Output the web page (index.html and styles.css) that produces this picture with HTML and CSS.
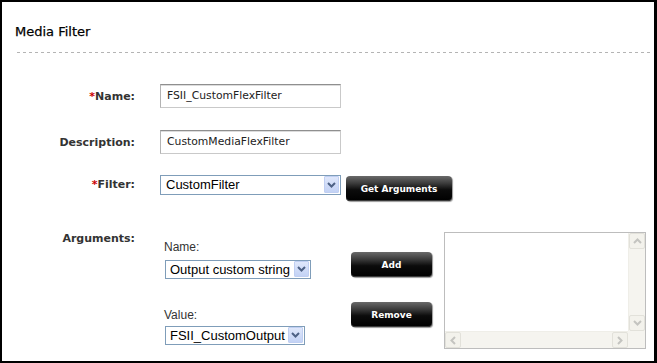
FILE: index.html
```html
<!DOCTYPE html>
<html>
<head>
<meta charset="utf-8">
<link rel="stylesheet" href="styles.css">
</head>
<body>
<div class="frame">
  <h2 class="title">Media Filter</h2>
  <div class="rule"></div>

  <div class="row row-name">
    <label class="lbl"><span class="req">*</span>Name:</label>
    <div class="input">FSII_CustomFlexFilter</div>
  </div>

  <div class="row row-desc">
    <label class="lbl">Description:</label>
    <div class="input">CustomMediaFlexFilter</div>
  </div>

  <div class="row row-filter">
    <label class="lbl lbl-sel"><span class="req">*</span>Filter:</label>
    <div class="field-inline">
      <div class="select sel-filter">
        <span class="sel-text">CustomFilter</span>
        <span class="sel-arrow"><svg width="9" height="6" viewBox="0 0 9 6"><polyline points="1,1 4.5,4.5 8,1" fill="none" stroke="#4d6185" stroke-width="2"/></svg></span>
      </div>
      <button class="btn btn-get">Get Arguments</button>
    </div>
  </div>

  <div class="row row-args">
    <label class="lbl lbl-args">Arguments:</label>
    <div class="args">
      <div class="args-col">
        <div class="small-lbl">Name:</div>
        <div class="select sel-small sel-name">
          <span class="sel-text">Output custom string</span>
          <span class="sel-arrow"><svg width="9" height="6" viewBox="0 0 9 6"><polyline points="1,1 4.5,4.5 8,1" fill="none" stroke="#4d6185" stroke-width="2"/></svg></span>
        </div>
        <div class="small-lbl small-lbl-value">Value:</div>
        <div class="select sel-small sel-value">
          <span class="sel-text">FSII_CustomOutput</span>
          <span class="sel-arrow"><svg width="9" height="6" viewBox="0 0 9 6"><polyline points="1,1 4.5,4.5 8,1" fill="none" stroke="#4d6185" stroke-width="2"/></svg></span>
        </div>
      </div>
      <div class="btn-col">
        <button class="btn btn-add">Add</button>
        <button class="btn btn-remove">Remove</button>
      </div>
      <div class="listbox">
        <div class="list-content"></div>
        <div class="vscroll">
          <span class="sb-btn"><svg width="9" height="6" viewBox="0 0 9 6"><polyline points="1,5 4.5,1.5 8,5" fill="none" stroke="#c4c4c0" stroke-width="2"/></svg></span>
          <span class="sb-btn"><svg width="9" height="6" viewBox="0 0 9 6"><polyline points="1,1 4.5,4.5 8,1" fill="none" stroke="#c4c4c0" stroke-width="2"/></svg></span>
        </div>
        <div class="hscroll">
          <span class="sb-btn"><svg width="6" height="9" viewBox="0 0 6 9"><polyline points="5,1 1.5,4.5 5,8" fill="none" stroke="#c4c4c0" stroke-width="2"/></svg></span>
          <span class="sb-btn"><svg width="6" height="9" viewBox="0 0 6 9"><polyline points="1,1 4.5,4.5 1,8" fill="none" stroke="#c4c4c0" stroke-width="2"/></svg></span>
        </div>
        <div class="corner"></div>
      </div>
    </div>
  </div>
</div>
</body>
</html>
```

FILE: styles.css
```css
* { box-sizing: border-box; }
html, body { margin: 0; padding: 0; background: #fff; }
body { width: 657px; height: 363px; overflow: hidden; }

.frame {
  width: 657px;
  height: 363px;
  border-top: 2px solid #000;
  border-left: 2px solid #000;
  border-right: 3px solid #000;
  border-bottom: 2px solid #000;
  font-family: "DejaVu Sans", Verdana, sans-serif;
  color: #333;
}

.title {
  margin: 22px 0 0 13px;
  font-size: 13px;
  line-height: 16px;
  font-weight: normal;
  color: #000;
  -webkit-text-stroke: 0.25px #000;
}

.rule {
  margin: 12px 2px 0 15px;
  height: 1px;
  background: repeating-linear-gradient(to right, #b4b4b4 0, #b4b4b4 3px, transparent 3px, transparent 6px);
}

.row {
  display: grid;
  grid-template-columns: 133px auto;
  column-gap: 25px;
  align-items: center;
}
.row-name { margin-top: 31px; }
.row-desc { margin-top: 22px; }
.row-filter { margin-top: 21px; align-items: start; }
.row-args { margin-top: 31px; align-items: start; }

.lbl {
  text-align: right;
  font-weight: bold;
  font-size: 11px;
  line-height: 13px;
  color: #333;
}
.lbl-sel { line-height: 20px; }
.req { color: #cc0000; }

.input {
  width: 181px;
  height: 24px;
  border: 1px solid #c9c9c9;
  border-top-color: #8f8f8f;
  border-left-color: #b3b3b3;
  box-shadow: inset 0 1px 0 #dcdcdc;
  padding: 0 0 0 6px;
  font-size: 10.8px;
  line-height: 22px;
  color: #222;
}

.field-inline {
  display: flex;
  align-items: flex-start;
  gap: 5px;
}

.select {
  display: flex;
  align-items: stretch;
  border: 1px solid #7f9db9;
  background: #fff;
  font-family: "Liberation Sans", Arial, sans-serif;
  font-size: 13px;
  color: #000;
}
.sel-filter { width: 181px; height: 20px; }
.sel-text {
  flex: 1;
  padding-left: 5px;
  line-height: 18px;
  white-space: nowrap;
  overflow: hidden;
}
.sel-arrow {
  width: 15px;
  margin: 0 1px 1px 0;
  display: flex;
  align-items: center;
  justify-content: center;
  background: linear-gradient(to bottom, #dfe7fb, #c3d2f5);
  border: 1px solid #c0cff2;
  border-radius: 1px;
}

.btn {
  display: block;
  border: 0;
  padding: 0;
  margin: 0;
  border-radius: 4px;
  background: linear-gradient(to bottom, #6a6a6a 0%, #3a3a3a 30%, #0c0c0c 55%, #000 100%);
  box-shadow: 1px 1px 1px #9a9a9a, inset 0 -1px 0 #3a3a3a;
  color: #fff;
  font-family: "DejaVu Sans", Verdana, sans-serif;
  font-weight: bold;
  font-size: 9px;
  text-align: center;
}
.btn-get { width: 106px; height: 25px; margin-top: 1px; }

.args {
  display: flex;
  align-items: flex-start;
}
.args-col {
  width: 191px;
  padding-left: 5px;
  padding-top: 8px;
}
.small-lbl {
  font-family: "Liberation Sans", Arial, sans-serif;
  font-size: 12px;
  line-height: 14px;
  color: #333;
  margin-left: -1px;
}
.small-lbl-value { margin-top: 29px; }
.sel-small { height: 19px; margin-top: 6px; }
.sel-small .sel-text { line-height: 17px; padding-left: 4px; }
.sel-name { width: 146px; }
.sel-value { width: 140px; margin-top: 4px; }

.btn-col {
  width: 81px;
  padding-top: 20px;
}
.btn-add, .btn-remove { width: 81px; height: 25px; }
.btn-remove { margin-top: 25px; }

.listbox {
  margin-left: 12px;
  width: 202px;
  height: 117px;
  border: 1px solid #bdbdbd;
  display: grid;
  grid-template-columns: 1fr 17px;
  grid-template-rows: 1fr 17px;
  background: #fff;
}
.vscroll, .hscroll {
  background: #f5f4ef;
  display: flex;
  justify-content: space-between;
}
.vscroll { flex-direction: column; border-left: 1px solid #efeee8; }
.hscroll { border-top: 1px solid #efeee8; }
.corner { background: #f5f4ef; }
.sb-btn {
  width: 16px;
  height: 16px;
  display: flex;
  align-items: center;
  justify-content: center;
  background: #f3f2ec;
  border: 1px solid #e2e1da;
  border-radius: 2px;
}
```
